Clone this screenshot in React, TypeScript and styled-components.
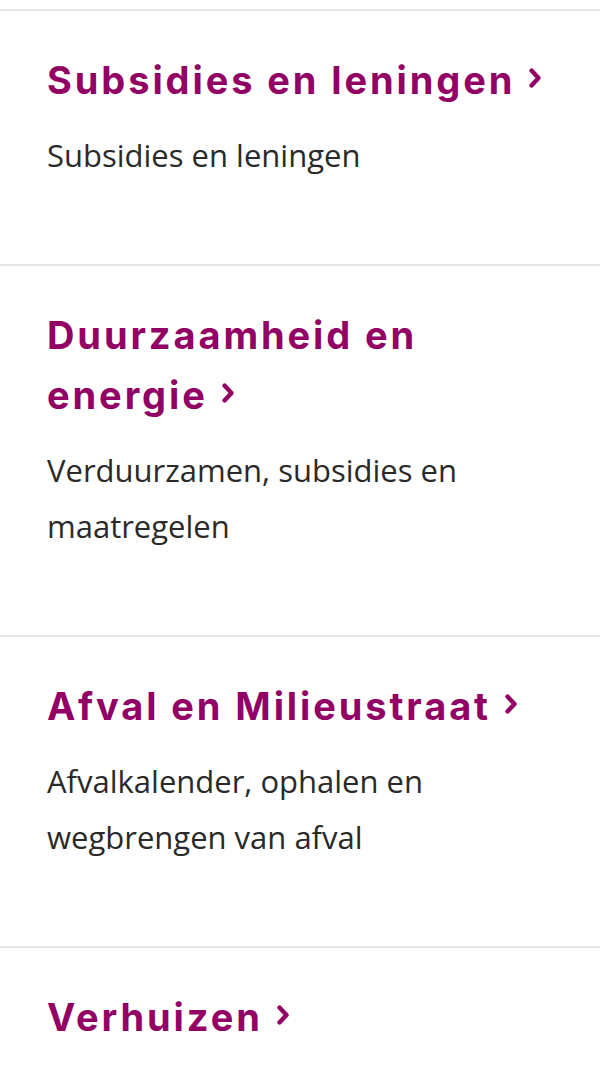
import React from "react";
import styled, { createGlobalStyle } from "styled-components";

const GlobalStyle = createGlobalStyle`
  html, body {
    margin: 0;
    padding: 0;
    background: #ffffff;
  }
  body {
    font-family: "Open Sans", "Liberation Sans", sans-serif;
  }
`;

const Page = styled.main`
  width: 600px;
  padding-top: 9px;
  background: #ffffff;
`;

const List = styled.ul`
  list-style: none;
  margin: 0;
  padding: 0;
`;

const Item = styled.li`
  border-top: 2px solid #e6e6e6;
  padding: 39px 47px 81px 47px;
`;

const Heading = styled.a`
  display: block;
  margin: 0 0 17px 0;
  font-family: "Inter", "Liberation Sans", sans-serif;
  font-weight: 700;
  font-size: 38px;
  letter-spacing: 2.9px;
  line-height: 60px;
  color: #920066;
  text-decoration: none;
`;

const Chevron = styled.svg`
  display: inline-block;
  width: 14px;
  height: 22px;
  margin-left: 13px;
  vertical-align: 5px;
`;

const Description = styled.p`
  margin: 0;
  font-family: "Open Sans", "Liberation Sans", sans-serif;
  font-weight: 400;
  font-size: 31px;
  line-height: 56px;
  color: #2a2a2a;
`;

type Topic = { title: string; text?: string };

const topics: Topic[] = [
  { title: "Subsidies en leningen", text: "Subsidies en leningen" },
  { title: "Duurzaamheid en energie", text: "Verduurzamen, subsidies en maatregelen" },
  { title: "Afval en Milieustraat", text: "Afvalkalender, ophalen en wegbrengen van afval" },
  { title: "Verhuizen" },
];

const ChevronIcon = () => (
  <Chevron viewBox="0 0 14 22" aria-hidden="true">
    <polyline
      points="3.5,3.5 10.5,11 3.5,18.5"
      fill="none"
      stroke="#920066"
      strokeWidth="4.4"
      strokeLinecap="round"
      strokeLinejoin="round"
    />
  </Chevron>
);

export default function App() {
  return (
    <Page>
      <GlobalStyle />
      <List>
        {topics.map((t) => (
          <Item key={t.title}>
            <Heading href="#">
              {t.title}
              <ChevronIcon />
            </Heading>
            {t.text && <Description>{t.text}</Description>}
          </Item>
        ))}
      </List>
    </Page>
  );
}
